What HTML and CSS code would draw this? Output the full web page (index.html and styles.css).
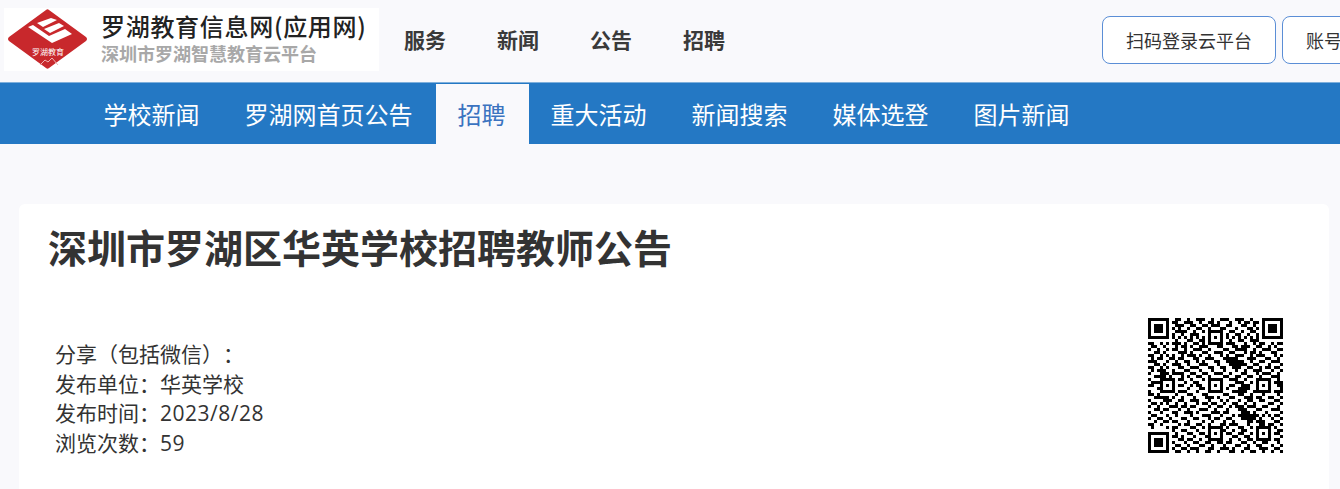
FILE: index.html
```html
<!DOCTYPE html>
<html lang="zh-CN">
  <head>
    <meta charset="UTF-8" />
    <title>深圳市罗湖区华英学校招聘教师公告</title>
    <link rel="stylesheet" href="styles.css">
  </head>
  <body>
    <header class="topbar">
      <div class="logo">
        <svg class="logo-mark" width="84" height="63" viewBox="0 0 84 63">
          <path d="M39 2 Q40.5 0.5 42 2 L79 29 Q81 31 79 33 L42 60 Q40.5 61.5 39 60 L2 33 Q0 31 2 29 Z" fill="#c8282c"/>
          <path d="M21 19 L26 17 L42 28 L58 21 L65 26 L45 35 Z" fill="#fff"/>
          <path d="M30 15 L44 10 L50 12 L36 19 Z" fill="#fff"/>
          <path d="M37 21 L52 15 L57 18 L43 25 Z" fill="#fff"/>
          <text x="41" y="47" class="logo-mark-text">罗湖教育</text>
          <path d="M33 57 L38 52 L41 54 L45 50 L51 57" fill="none" stroke="#eeb4b4" stroke-width="1"/>
        </svg>
        <div class="logo-text">
          <div class="logo-title">罗湖教育信息网(应用网)</div>
          <div class="logo-sub">深圳市罗湖智慧教育云平台</div>
        </div>
      </div>
      <nav class="toplinks">
        <a>服务</a>
        <a>新闻</a>
        <a>公告</a>
        <a>招聘</a>
      </nav>
      <div class="login">
        <button type="button">扫码登录云平台</button>
        <button type="button">账号登录云平台</button>
      </div>
    </header>

    <nav class="tabs">
      <a>学校新闻</a>
      <a>罗湖网首页公告</a>
      <a class="active">招聘</a>
      <a>重大活动</a>
      <a>新闻搜索</a>
      <a>媒体选登</a>
      <a>图片新闻</a>
    </nav>

    <section class="card">
      <h1>深圳市罗湖区华英学校招聘教师公告</h1>
      <div class="info">
        <div class="meta">
          <div>分享（包括微信）：</div>
          <div>发布单位：华英学校</div>
          <div>发布时间：<span class="num">2023/8/28</span></div>
          <div>浏览次数：<span class="num">59</span></div>
        </div>
        <svg class="qr" width="135" height="135" viewBox="0 0 45 45">
          <path transform="translate(0 .5)" stroke="#000" fill="none" d="
            M0 0h7M9 0h2M13 0h1M16 0h3M21 0h1M24 0h3M29 0h3M34 0h1M38 0h7
            M0 1h1M6 1h1M8 1h2M12 1h3M17 1h1M20 1h2M23 1h1M27 1h1M30 1h1M32 1h2M35 1h2M38 1h1M44 1h1
            M0 2h1M2 2h3M6 2h1M9 2h3M14 2h2M18 2h2M21 2h3M26 2h2M31 2h2M35 2h1M38 2h1M40 2h3M44 2h1
            M0 3h1M2 3h3M6 3h1M8 3h1M10 3h1M13 3h1M16 3h2M20 3h1M24 3h2M29 3h1M33 3h2M36 3h1M38 3h1M40 3h3M44 3h1
            M0 4h1M2 4h3M6 4h1M9 4h4M15 4h1M18 4h1M20 4h5M27 4h2M31 4h1M34 4h2M38 4h1M40 4h3M44 4h1
            M0 5h1M6 5h1M8 5h1M11 5h1M14 5h3M20 5h1M24 5h1M26 5h1M29 5h2M33 5h1M36 5h1M38 5h1M44 5h1
            M0 6h7M8 6h1M10 6h1M12 6h1M14 6h1M16 6h1M18 6h1M20 6h1M22 6h1M24 6h1M26 6h1M28 6h1M30 6h1M32 6h1M34 6h1M36 6h1M38 6h7
            M9 7h1M13 7h2M17 7h2M20 7h1M24 7h1M27 7h1M30 7h2M34 7h3
            M0 8h2M4 8h1M6 8h1M8 8h3M12 8h1M15 8h2M18 8h1M20 8h5M26 8h3M32 8h1M35 8h1M37 8h2M41 8h1M43 8h2
            M1 9h2M5 9h1M9 9h1M11 9h2M14 9h1M17 9h3M23 9h2M28 9h2M31 9h3M36 9h2M40 9h1M42 9h1
            M0 10h1M3 10h1M6 10h1M8 10h2M12 10h1M15 10h3M20 10h1M25 10h2M29 10h4M35 10h1M38 10h3M43 10h2
            M2 11h2M5 11h1M10 11h3M14 11h1M18 11h2M22 11h3M27 11h2M32 11h1M34 11h2M37 11h1M41 11h2
            M0 12h2M4 12h1M6 12h1M8 12h1M11 12h1M13 12h3M17 12h1M20 12h1M24 12h1M26 12h1M29 12h3M34 12h1M36 12h3M42 12h1M44 12h1
            M1 13h1M3 13h2M7 13h2M10 13h2M15 13h2M19 13h3M25 13h5M33 13h3M39 13h2M43 13h1
            M0 14h3M6 14h1M9 14h1M12 14h2M16 14h1M18 14h1M22 14h2M26 14h6M34 14h1M37 14h2M41 14h3
            M2 15h2M5 15h1M8 15h3M13 15h1M17 15h3M23 15h1M27 15h6M35 15h2M40 15h1M44 15h1
            M0 16h2M4 16h1M6 16h1M10 16h2M14 16h3M20 16h2M24 16h2M28 16h3M33 16h2M37 16h1M39 16h2M42 16h2
            M1 17h1M3 17h3M8 17h1M12 17h2M17 17h1M21 17h1M25 17h1M29 17h1M32 17h1M35 17h3M41 17h1M44 17h1
            M0 18h1M4 18h3M8 18h4M14 18h2M18 18h2M22 18h3M27 18h1M31 18h2M36 18h1M38 18h3M43 18h1
            M2 19h4M7 19h1M11 19h1M13 19h1M16 19h2M20 19h1M25 19h2M29 19h2M33 19h2M37 19h1M41 19h3
            M0 20h1M4 20h5M10 20h2M14 20h1M18 20h1M20 20h5M27 20h3M32 20h1M36 20h5M43 20h1
            M1 21h3M4 21h1M8 21h1M12 21h1M15 21h2M20 21h1M24 21h1M29 21h3M34 21h1M36 21h1M40 21h1M42 21h3
            M0 22h2M4 22h1M6 22h1M8 22h1M10 22h2M14 22h1M16 22h2M20 22h1M22 22h1M24 22h1M27 22h2M31 22h3M36 22h1M38 22h1M40 22h1M43 22h2
            M3 23h1M4 23h1M8 23h1M13 23h1M17 23h2M20 23h1M24 23h1M26 23h1M30 23h4M36 23h1M40 23h1M44 23h1
            M0 24h1M4 24h5M10 24h3M16 24h1M20 24h5M28 24h5M35 24h1M36 24h5M42 24h3
            M0 25h2M3 25h1M9 25h1M13 25h2M18 25h2M25 25h2M30 25h2M34 25h1M38 25h1M43 25h1
            M2 26h5M8 26h1M11 26h1M15 26h1M19 26h3M23 26h1M27 26h2M32 26h3M36 26h2M40 26h2M44 26h1
            M0 27h1M5 27h3M10 27h2M14 27h3M20 27h1M24 27h1M26 27h1M30 27h1M33 27h2M37 27h2M42 27h2
            M1 28h2M4 28h1M6 28h1M9 28h1M12 28h1M16 28h1M18 28h2M21 28h2M25 28h1M28 28h2M32 28h1M35 28h1M40 28h2M44 28h1
            M0 29h1M3 29h1M7 29h3M11 29h2M14 29h2M20 29h1M23 29h2M27 29h1M29 29h3M33 29h3M38 29h2M43 29h1
            M2 30h2M5 30h2M10 30h1M13 30h1M17 30h3M22 30h1M26 30h1M30 30h3M36 30h2M41 30h3
            M0 31h1M4 31h1M8 31h2M12 31h3M16 31h1M21 31h3M25 31h2M31 31h3M35 31h1M39 31h1M44 31h1
            M1 32h2M6 32h1M9 32h1M14 32h1M18 32h3M24 32h1M28 32h1M30 32h7M38 32h1M40 32h1M42 32h2
            M0 33h1M3 33h2M7 33h1M11 33h2M15 33h2M20 33h1M22 33h2M26 33h2M31 33h5M37 33h1M41 33h1M44 33h1
            M2 34h1M5 34h2M8 34h2M13 34h1M18 34h1M21 34h1M25 34h1M28 34h1M33 34h2M36 34h3M42 34h2
            M0 35h2M4 35h1M10 35h1M12 35h2M16 35h2M20 35h1M24 35h2M27 35h3M33 35h1M37 35h2M40 35h2M44 35h1
            M1 36h1M6 36h1M8 36h2M14 36h2M18 36h1M20 36h5M26 36h1M30 36h2M34 36h1M36 36h5M42 36h1
            M8 37h1M11 37h2M16 37h1M20 37h1M24 37h2M28 37h1M31 37h2M36 37h1M40 37h1M43 37h2
            M0 38h7M9 38h1M13 38h2M17 38h2M20 38h1M22 38h1M24 38h1M26 38h2M30 38h2M34 38h1M36 38h1M38 38h1M40 38h1M42 38h2
            M0 39h1M6 39h1M8 39h2M11 39h1M15 39h1M19 39h1M20 39h1M24 39h1M28 39h2M32 39h2M36 39h1M40 39h1M44 39h1
            M0 40h1M2 40h3M6 40h1M10 40h2M13 40h2M17 40h1M20 40h5M27 40h1M30 40h1M33 40h2M36 40h5M42 40h2
            M0 41h1M2 41h3M6 41h1M8 41h1M12 41h1M15 41h2M19 41h2M23 41h2M26 41h2M31 41h2M35 41h1M38 41h2M43 41h1
            M0 42h1M2 42h3M6 42h1M9 42h2M13 42h1M17 42h2M21 42h1M25 42h1M29 42h2M33 42h1M36 42h2M41 42h1M44 42h1
            M0 43h1M6 43h1M8 43h1M11 43h2M14 43h3M20 43h2M24 43h3M28 43h1M32 43h2M37 43h3M42 43h2
            M0 44h7M9 44h2M13 44h1M16 44h1M19 44h2M23 44h1M27 44h2M31 44h1M34 44h2M38 44h1M41 44h1M44 44h1"/>
        </svg>
      </div>
    </section>
  </body>
</html>
```

FILE: styles.css
```css
html,
body {
  height: 100%;
}

body {
  margin: 0;
  background-color: #f9f9fc;
  font-family: "Noto Sans CJK SC", "Noto Sans", sans-serif;
  color: #333;
  overflow: hidden;
}

.topbar {
  display: flex;
  align-items: center;
  height: 80px;
  padding-bottom: 2px;
  border-bottom: 1px solid #7fb0dc;
}

.logo {
  display: flex;
  align-items: center;
  width: 375px;
  height: 63px;
  margin: -1px 0 0 4px;
  background-color: #fff;
  flex-shrink: 0;
}

.logo-mark {
  margin-left: 3px;
  flex-shrink: 0;
}

.logo-mark-text {
  font-size: 8px;
  fill: #fff;
  text-anchor: middle;
}

.logo-text {
  margin: -4px 0 0 10px;
}

.logo-title {
  font-size: 24px;
  line-height: 30px;
  font-weight: 500;
  letter-spacing: .7px;
  color: #222;
  white-space: nowrap;
}

.logo-sub {
  font-size: 18px;
  line-height: 24px;
  font-weight: 700;
  color: #a8a8a8;
  white-space: nowrap;
}

.toplinks {
  display: flex;
  gap: 51px;
  margin: -3px 0 0 25px;
  font-size: 21px;
  font-weight: 700;
  color: #3a3a3a;
}

.login {
  display: flex;
  gap: 6px;
  margin-left: auto;
  margin-right: -116px;
  flex-shrink: 0;
}

.login button {
  width: 174px;
  height: 48px;
  padding: 0;
  background-color: #fff;
  border: 1px solid #5b8ed6;
  border-radius: 8px;
  font-family: inherit;
  font-size: 18px;
  color: #333;
}

.tabs {
  display: flex;
  height: 61px;
  padding-left: 81.5px;
  background-color: #2478c4;
  font-size: 24px;
  line-height: 61px;
  color: #fff;
}

.tabs a {
  padding: 0 23px 0 22px;
}

.tabs .active {
  margin-top: 1px;
  line-height: 59px;
  background-color: #f9f9fc;
  color: #3b73c0;
}

.card {
  margin: 60px 11px 0 19px;
  padding: 12px 29px 0;
  height: 400px;
  background-color: #fff;
  border-radius: 6px;
}

h1 {
  margin: 0;
  font-size: 39px;
  line-height: 60px;
  font-weight: 700;
  color: #333;
}

.info {
  display: flex;
  justify-content: space-between;
  align-items: flex-start;
  margin-top: 42px;
  padding-left: 7px;
  padding-right: 17px;
}

.meta {
  margin-top: 22px;
  font-family: "Open Sans", "Noto Sans CJK SC", sans-serif;
  font-size: 21px;
  line-height: 29.7px;
  text-spacing-trim: space-all;
}

.num {
  letter-spacing: .5px;
}

.qr {
  shape-rendering: crispEdges;
  flex-shrink: 0;
}
```
